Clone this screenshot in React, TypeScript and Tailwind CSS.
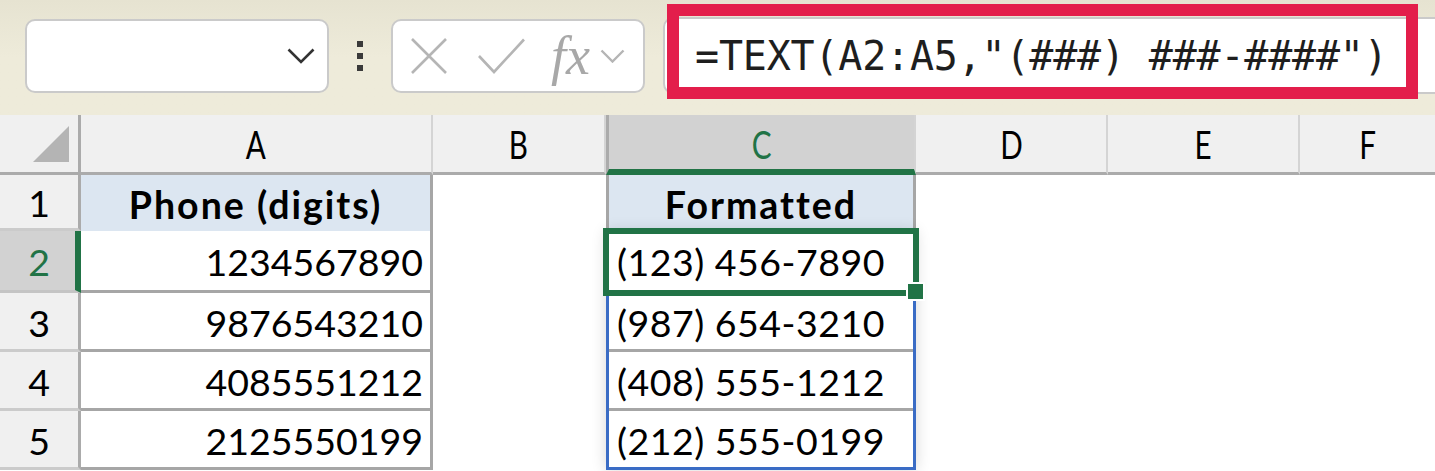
import type { ReactElement, ReactNode } from "react";

const GREEN = "#217346";

interface DataRow {
  readonly n: number;
  readonly height: string;
  readonly digits: string;
  readonly formatted: string;
}

const ROWS: readonly DataRow[] = [
  { n: 2, height: "h-[62px]", digits: "1234567890", formatted: "(123) 456-7890" },
  { n: 3, height: "h-[59px]", digits: "9876543210", formatted: "(987) 654-3210" },
  { n: 4, height: "h-[59px]", digits: "4085551212", formatted: "(408) 555-1212" },
  { n: 5, height: "h-[59px]", digits: "2125550199", formatted: "(212) 555-0199" },
];

function ColumnHeader({ label, className }: { label: string; className: string }): ReactElement {
  return (
    <div className={`flex h-[60px] items-center justify-center border-b-[3px] border-b-[#ABABAB] bg-[#F0F0F0] ${className}`}>
      <span className="inline-block scale-x-[0.78] text-[38px] leading-none text-black">{label}</span>
    </div>
  );
}

function Toolbar(): ReactElement {
  return (
    <div className="relative flex h-[115px] items-start bg-gradient-to-b from-[#E6E3D1] via-[#EEEBDA] to-[#EEEBDA] pl-[25px] pt-[19px]">
      {/* name box */}
      <div className="flex h-[74px] w-[304px] items-center justify-end rounded-[10px] border-2 border-[#CACACA] bg-white pr-[12px]">
        <svg width="28" height="16" viewBox="0 0 28 16" fill="none" aria-hidden="true">
          <path d="M1.5 1.5 L14 14 L26.5 1.5" stroke="#333333" strokeWidth="2.6" />
        </svg>
      </div>

      <div className="ml-[28px] flex h-[74px] flex-col justify-center gap-[6px]">
        <span className="block size-[6px] bg-[#3A3A3A]" />
        <span className="block size-[6px] bg-[#3A3A3A]" />
        <span className="block size-[6px] bg-[#3A3A3A]" />
      </div>

      {/* cancel / enter / fx */}
      <div className="ml-[28px] flex h-[74px] w-[254px] items-center rounded-[10px] border-2 border-[#CACACA] bg-white pl-[18px]">
        <svg width="36" height="36" viewBox="0 0 36 36" fill="none" aria-hidden="true">
          <path d="M1 1 L35 35 M35 1 L1 35" stroke="#B5B5B5" strokeWidth="2.6" />
        </svg>
        <svg className="ml-[31px]" width="47" height="36" viewBox="0 0 47 36" fill="none" aria-hidden="true">
          <path d="M1 18 L16 34 L46 1.5" stroke="#B5B5B5" strokeWidth="2.6" />
        </svg>
        <span className="ml-[26px] font-['Liberation_Serif',serif] text-[54px] leading-none italic text-[#A8A8A8]">fx</span>
        <svg className="ml-[10px]" width="25" height="14" viewBox="0 0 25 14" fill="none" aria-hidden="true">
          <path d="M1.5 1.5 L12.5 12.5 L23.5 1.5" stroke="#B5B5B5" strokeWidth="2.4" />
        </svg>
      </div>

      {/* formula bar */}
      <div className="-mr-[20px] ml-[18px] -mt-[2px] flex h-[77px] flex-1 items-center rounded-l-[10px] border-2 border-[#CACACA] bg-white pl-[30px]">
        <span className="font-['DejaVu_Sans_Mono',monospace] text-[40px] leading-none tracking-[-0.2px] text-[#1E1E1E]">
          =TEXT(A2:A5,"(###) ###-####")
        </span>
      </div>

      {/* highlight around the formula */}
      <div className="pointer-events-none absolute left-[667px] top-[4px] h-[95px] w-[751px] border-[12px] border-[#E31E4B]" />
    </div>
  );
}

function Cell({ className, children }: { className: string; children?: ReactNode }): ReactElement {
  return <div className={`flex items-center pt-[3px] text-[37.5px] leading-none text-black ${className}`}>{children}</div>;
}

export default function App(): ReactElement {
  return (
    <div className="h-[471px] w-[1435px] overflow-hidden bg-white font-['Lato',sans-serif]">
      <Toolbar />

      <div className="flex">
        {/* row headers */}
        <div className="w-[81px] shrink-0">
          <div className="flex h-[60px] items-end justify-end border-b-[3px] border-r-[3px] border-[#ABABAB] bg-[#F0F0F0] pb-[10px] pr-[9px]">
            <svg width="36" height="36" viewBox="0 0 36 36" aria-hidden="true">
              <path d="M36 0 L36 36 L0 36 Z" fill="#B4B4B4" />
            </svg>
          </div>
          <Cell className="h-[56px] justify-center border-b-[3px] border-r-[3px] border-b-[#CBCBCB] border-r-[#ABABAB] bg-[#F0F0F0]">1</Cell>
          {ROWS.map((row) => (
            <Cell
              key={row.n}
              className={
                row.n === 2
                  ? `${row.height} justify-center border-b-[3px] border-r-[6px] border-b-[#C4C4C4] border-r-[#217346] bg-[#D2D2D2] pl-[3px] !text-[#217346]`
                  : `${row.height} justify-center border-b-[3px] border-r-[3px] border-b-[#CBCBCB] border-r-[#ABABAB] bg-[#F0F0F0]`
              }
            >
              {row.n}
            </Cell>
          ))}
        </div>

        {/* column A */}
        <div className="w-[352px] shrink-0">
          <ColumnHeader label="A" className="border-r-2 border-r-[#D4D4D4]" />
          <Cell className="h-[56px] justify-center border-r-[3px] border-[#A6A6A6] bg-[#DCE6F1] font-bold tracking-[2px]">Phone (digits)</Cell>
          {ROWS.map((row) => (
            <Cell key={row.n} className={`${row.height} justify-end border-b-[3px] border-r-[3px] border-[#A6A6A6] pr-[7px]`}>
              {row.digits}
            </Cell>
          ))}
        </div>

        {/* column B */}
        <div className="w-[173px] shrink-0">
          <ColumnHeader label="B" className="border-r-2 border-r-[#D4D4D4]" />
        </div>

        {/* column C */}
        <div className="w-[310px] shrink-0">
          <div className="flex h-[60px] items-center justify-center border-b-[6px] border-l-[3px] border-r-2 border-b-[#217346] border-l-[#ABABAB] border-r-[#D4D4D4] bg-[#D2D2D2] pt-[3px]">
            <span className="inline-block scale-x-[0.78] text-[38px] leading-none" style={{ color: GREEN }}>
              C
            </span>
          </div>
          <Cell className="h-[56px] justify-center border-x-[3px] border-[#A6A6A6] bg-[#DCE6F1] font-bold tracking-[2px]">Formatted</Cell>
          <div className="relative border-x-[3px] border-b-[3px] border-[#3A6CC5] shadow-[0_0_14px_rgba(0,0,0,0.16)]">
            {ROWS.map((row, i) => (
              <div key={row.n} className="relative">
                <Cell
                  className={
                    i === ROWS.length - 1
                      ? "h-[56px] justify-start pl-[8px] tracking-[0.5px]"
                      : `${row.height} justify-start border-b-[3px] border-[#A6A6A6] pl-[8px] tracking-[0.5px]`
                  }
                >
                  {row.formatted}
                </Cell>
                {i === 0 && (
                  <>
                    <div className="absolute -bottom-[3px] -left-[6px] -right-[6px] -top-[3px] border-[6px] border-[#217346]" />
                    <div className="absolute -bottom-[8px] -right-[12px] h-[19px] w-[19px] border-2 border-white bg-[#217346]" />
                  </>
                )}
              </div>
            ))}
          </div>
        </div>

        {/* columns D-F */}
        <div className="w-[192px] shrink-0">
          <ColumnHeader label="D" className="border-r-2 border-r-[#D4D4D4]" />
        </div>
        <div className="w-[192px] shrink-0">
          <ColumnHeader label="E" className="border-r-2 border-r-[#D4D4D4]" />
        </div>
        <div className="flex-1">
          <ColumnHeader label="F" className="" />
        </div>
      </div>
    </div>
  );
}
